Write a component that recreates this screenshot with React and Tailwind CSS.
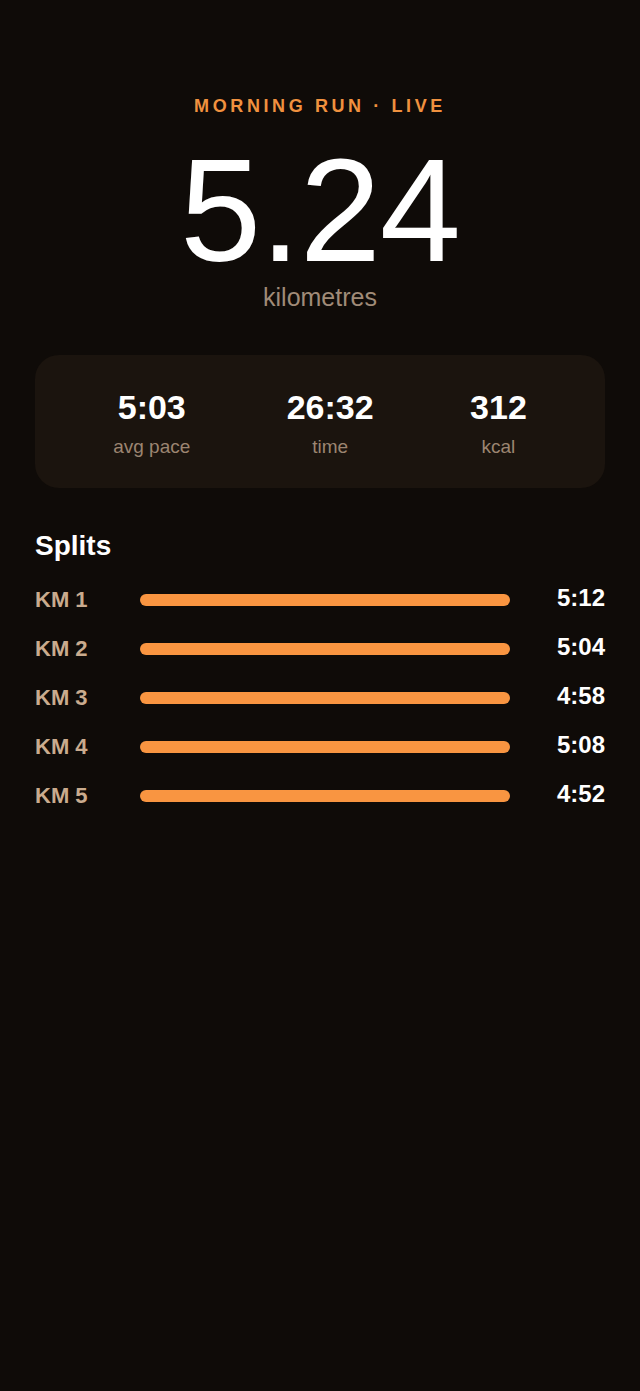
import React from "react";

// Live run summary with per-km splits
const stats = [
	{ value: "5:03", label: "avg pace" },
	{ value: "26:32", label: "time" },
	{ value: "312", label: "kcal" },
];

const splits = [
	{ km: "KM 1", time: "5:12" },
	{ km: "KM 2", time: "5:04" },
	{ km: "KM 3", time: "4:58" },
	{ km: "KM 4", time: "5:08" },
	{ km: "KM 5", time: "4:52" },
];

const App = () => {
	return (
		<div
			className="min-h-[1391px] w-full bg-[#0f0b08] px-[35px] pt-[92px]"
			style={{ fontFamily: '"Liberation Sans", Arial, sans-serif' }}
		>
			{/* Header */}
			<div className="flex flex-col items-center">
				<div className="text-[18px] leading-7 font-bold tracking-[0.2em] text-[#f0913f]">
					MORNING RUN · LIVE
				</div>
				<div className="mt-[21px] text-[146px] leading-[140px] tracking-[-1px] text-white">
					5.24
				</div>
				<div className="text-[25px] leading-8 text-[#a08b78]">
					kilometres
				</div>
			</div>

			{/* Summary card */}
			<div className="mt-[42px] flex justify-around rounded-[24px] bg-[#1b140e] px-[30px] pt-8 pb-[27px]">
				{stats.map((s) => (
					<div key={s.label} className="flex flex-col items-center">
						<div className="text-[34px] leading-10 font-bold text-white">
							{s.value}
						</div>
						<div className="mt-1.5 text-[19px] leading-7 text-[#9c8571]">
							{s.label}
						</div>
					</div>
				))}
			</div>

			{/* Splits */}
			<div className="mt-[42px] text-[28px] leading-8 font-bold text-white">
				Splits
			</div>
			<div className="mt-[13px] flex flex-col">
				{splits.map((s) => (
					<div key={s.km} className="flex h-[49px] items-center">
						<div className="w-[105px] text-[22px] font-bold text-[#caab8e]">
							{s.km}
						</div>
						<div className="h-3 flex-1 rounded-full bg-[#f99541]"></div>
						<div className="w-[95px] -translate-y-0.5 text-right text-[24px] font-bold text-white">
							{s.time}
						</div>
					</div>
				))}
			</div>
		</div>
	);
};

export default App;
